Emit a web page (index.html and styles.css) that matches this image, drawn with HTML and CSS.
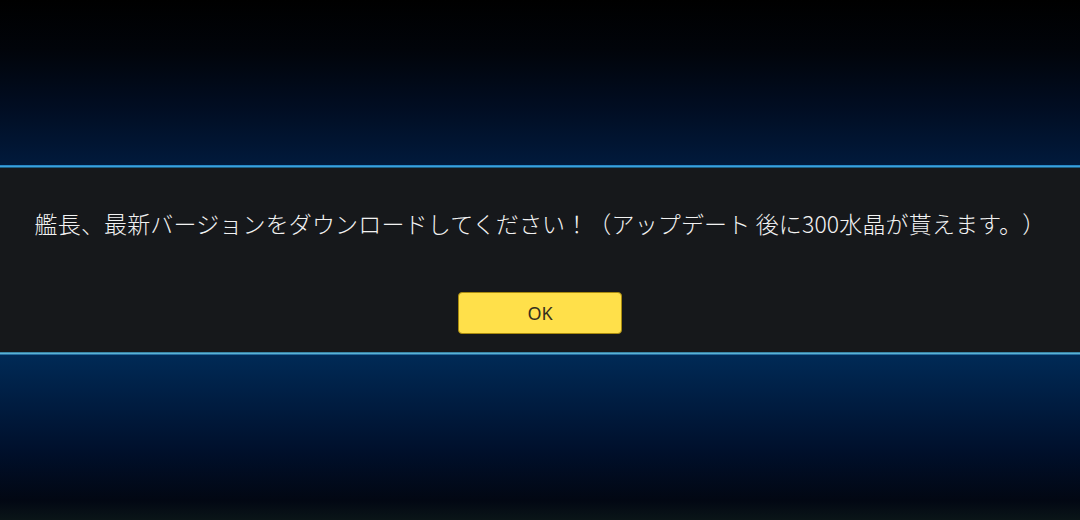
FILE: index.html
```html
<!DOCTYPE html>
<html lang="ja">
<head>
    <meta charset="UTF-8">
    <meta name="viewport" content="width=device-width, initial-scale=1.0">
    <title>Update</title>
    <link rel="stylesheet" href="styles.css">
</head>
<body>
    <div class="screen">
        <div class="sky-top"></div>
        <div class="glow-line top-line"></div>
        <div class="dialog">
            <p class="message">艦長、最新バージョンをダウンロードしてください！（アップデート 後に300水晶が貰えます。）</p>
            <button class="ok-button">OK</button>
        </div>
        <div class="glow-line bottom-line"></div>
        <div class="sky-bottom"></div>
    </div>
</body>
</html>
```

FILE: styles.css
```css
body {
    margin: 0;
    padding: 0;
    background-color: #000;
    font-family: "Noto Sans CJK JP", "Noto Sans", sans-serif;
}
.screen {
    width: 1080px;
    height: 520px;
    display: flex;
    flex-direction: column;
    overflow: hidden;
}
.sky-top {
    height: 165px;
    flex-shrink: 0;
    background: linear-gradient(to bottom, #000000 0%, #01040a 30%, #010d22 65%, #011a3c 100%);
}
.glow-line {
    height: 3px;
    flex-shrink: 0;
}
.top-line {
    background: linear-gradient(to bottom, #1d78b8, #3aa2dc 50%, #0e3c5a);
}
.bottom-line {
    background: linear-gradient(to bottom, #2b6f8e, #5ab2d4 50%, #0b4a86);
}
.dialog {
    height: 184px;
    flex-shrink: 0;
    background-color: #16181b;
    display: flex;
    flex-direction: column;
    align-items: center;
    padding-top: 38px;
    box-sizing: border-box;
}
.message {
    margin: 0;
    color: #f2f2f2;
    font-size: 23px;
    font-weight: 300;
    line-height: 34px;
    letter-spacing: 0.15px;
    white-space: nowrap;
    text-spacing-trim: space-all;
}
.ok-button {
    margin-top: 52px;
    width: 164px;
    height: 42px;
    background-color: #ffe04a;
    border: 1px solid #a88a10;
    border-radius: 4px;
    color: #352f1e;
    font-family: "Noto Sans", sans-serif;
    font-size: 18px;
    cursor: pointer;
}
.sky-bottom {
    flex: 1;
    background: linear-gradient(to bottom, #002a56 0%, #001c40 30%, #000f2a 60%, #020713 88%, #0a1518 100%);
}
```
